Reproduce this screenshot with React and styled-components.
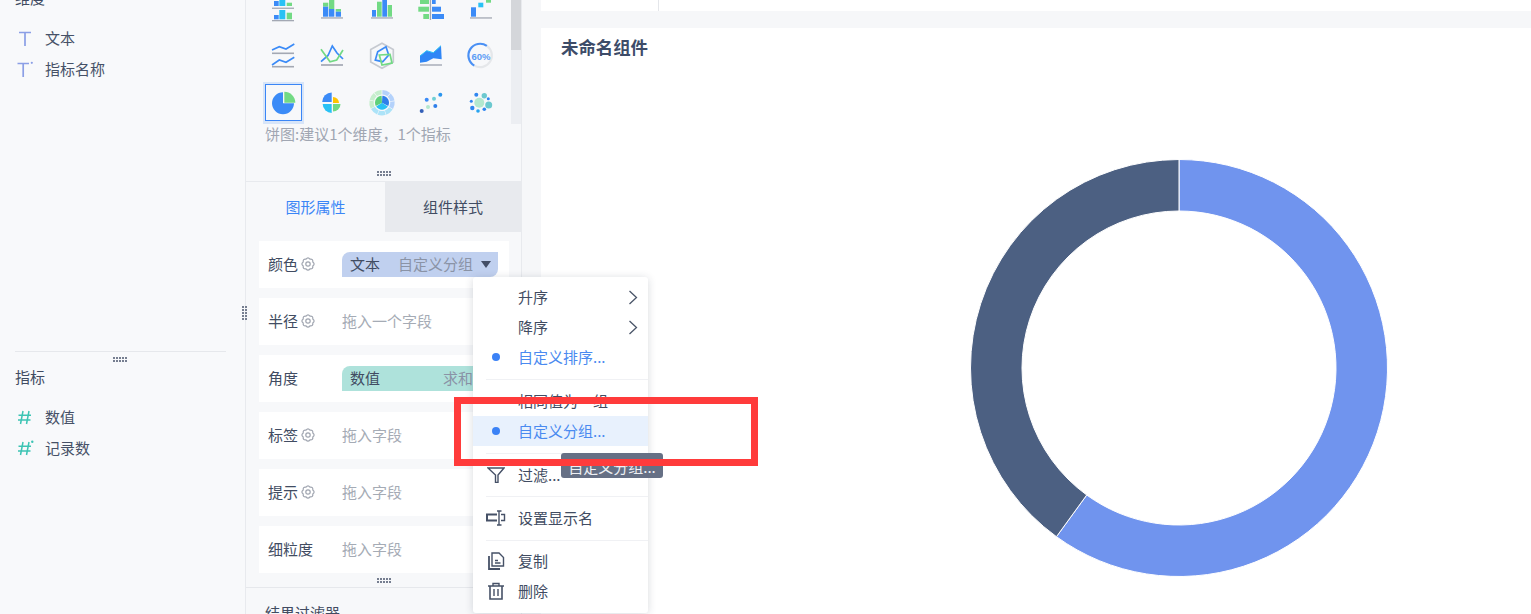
import React from 'react';
import styled, { createGlobalStyle } from 'styled-components';

const GlobalStyle = createGlobalStyle`
  html, body { margin: 0; padding: 0; height: 100%; overflow: hidden; background: #f6f7f9; }
  body { font-family: "Noto Sans CJK SC", "Liberation Sans", sans-serif; font-size: 15px; color: #414c62; }
  * { box-sizing: border-box; }
`;

const Page = styled.div`
  position: relative;
  display: flex;
  width: 1531px;
  height: 614px;
  overflow: hidden;
`;

/* ---------- field list ---------- */
const Sidebar = styled.aside`
  position: relative;
  flex: 0 0 246px;
  display: flex;
  flex-direction: column;
  background: #f8f9fb;
  border-right: 1px solid #e8eaee;
`;
const DimensionBlock = styled.section`
  flex: none;
  height: 352px;
  margin: 0 19px 0 15px;
  border-bottom: 1px solid #e6e8ec;
`;
const SectionTitle = styled.h3`
  margin: 0;
  font-size: 15px;
  font-weight: 400;
  line-height: 20px;
  color: #414c62;
`;
const DimensionTitle = styled(SectionTitle)`
  margin-top: -12px;
`;
const MeasureBlock = styled.section`
  margin: 0 19px 0 15px;
`;
const MeasureTitle = styled(SectionTitle)`
  margin-top: 1px;
`;
const FieldList = styled.ul`
  list-style: none;
  margin: ${p => p.$top}px 0 0;
  padding: 0;
`;
const FieldRow = styled.li`
  display: flex;
  align-items: center;
  height: 31px;
  padding-bottom: 1px;
  line-height: 30px;
  color: #465167;
`;
const FieldIcon = styled.span`
  display: flex;
  justify-content: flex-start;
  width: 30px;
  padding-left: 1px;
`;
const HandleRow = styled.div`
  flex: none;
  display: flex;
  justify-content: center;
  align-items: center;
  height: 14px;
  margin-left: ${p => p.$shift || 0}px;
`;
const SideGrip = styled.div`
  position: absolute;
  right: -3px;
  top: 305px;
  line-height: 0;
`;

/* ---------- chart picker + properties ---------- */
const Middle = styled.section`
  flex: 0 0 276px;
  display: flex;
  flex-direction: column;
  background: #f7f8fa;
  border-right: 1px solid #e8eaee;
  & > * { flex: none; }
`;
const Picker = styled.div`
  height: 182px;
  border-bottom: 1px solid #e8eaee;
`;
const PickerScroll = styled.div`
  display: flex;
  height: 124px;
  overflow: hidden;
`;
const ChartGrid = styled.div`
  display: grid;
  grid-template-columns: repeat(5, 49.5px);
  grid-auto-rows: 48px;
  width: 265px;
  height: 144px;
  margin-top: -17px;
  padding-left: 12px;
  flex: none;
`;
const ChartCell = styled.div`
  display: flex;
  align-items: center;
  justify-content: center;
`;
const SelectedFrame = styled.div`
  display: flex;
  align-items: center;
  justify-content: center;
  flex: none;
  width: 41px;
  height: 42px;
  margin-left: 2px;
  padding: 2px 2px 3px;
  background: #d7e5f9;
`;
const SelectedInner = styled.div`
  display: flex;
  align-items: center;
  justify-content: center;
  width: 100%;
  height: 100%;
  border: 1px solid #3b86f6;
  background: #f7f8fa;
`;
const ScrollTrack = styled.div`
  width: 10px;
  height: 124px;
  background: #eceef2;
`;
const ScrollThumb = styled.div`
  height: 50px;
  background: #d4d6da;
`;
const Caption = styled.p`
  margin: 0;
  padding-left: 19px;
  line-height: 20px;
  color: #a0a6b2;
`;
const PickerGrip = styled.div`
  display: flex;
  justify-content: center;
  margin-top: 26px;
  line-height: 0;
`;
const Tabs = styled.div`
  display: flex;
  height: 50px;
`;
const Tab = styled.div`
  display: flex;
  align-items: center;
  justify-content: center;
  width: ${p => p.$w}px;
  padding-bottom: 1px;
  color: ${p => (p.$active ? '#3b86f6' : '#414c62')};
  background: ${p => (p.$active ? '#f7f8fa' : '#e8eaee')};
`;
const ShelfList = styled.div`
  display: flex;
  flex-direction: column;
  gap: 10px;
  padding: 9px 12px 0 13px;
`;
const Shelf = styled.div`
  display: flex;
  align-items: center;
  height: 47px;
  padding-left: 9px;
  background: #fff;
`;
const ShelfLabel = styled.div`
  display: flex;
  align-items: center;
  gap: 3px;
  width: 74px;
  padding-bottom: 2px;
  color: #414c62;
`;
const Placeholder = styled.span`
  padding-bottom: 2px;
  color: #a5abb5;
`;
const Pill = styled.div`
  display: flex;
  align-items: center;
  width: 156px;
  height: 25px;
  padding: 0 ${p => p.$pr}px 2px 8px;
  border-radius: 8px 0 8px 0;
  background: ${p => p.$bg};
  color: #414c62;
`;
const PillName = styled.span`
  flex: 1;
`;
const PillHint = styled.span`
  color: #8a93a6;
`;
const Caret = styled.i`
  width: 0;
  height: 0;
  margin: 2px 0 0 8px;
  border-left: 5px solid transparent;
  border-right: 5px solid transparent;
  border-top: 7px solid #434e66;
`;
const ResultFilter = styled.div`
  border-top: 1px solid #e6e8ec;
  padding: 15px 0 0 19px;
  line-height: 20px;
  color: #414c62;
`;

/* ---------- canvas ---------- */
const Main = styled.main`
  flex: 1;
  display: flex;
  flex-direction: column;
  padding-left: 19px;
  background: #f6f7f9;
`;
const TopStrip = styled.div`
  flex: 0 0 11px;
  display: flex;
  background: #fff;
`;
const StripCell = styled.div`
  width: 118px;
  border-right: 1px solid #e4e6ea;
`;
const Card = styled.div`
  flex: 1;
  margin-top: 17px;
  background: #fff;
`;
const CardTitle = styled.h2`
  margin: 0;
  padding-left: 20px;
  font-size: 17.4px;
  font-weight: 700;
  line-height: 38px;
  color: #3d4c68;
`;
const ChartArea = styled.div`
  padding: 92px 0 0 428px;
  line-height: 0;
`;

/* ---------- context menu ---------- */
const Menu = styled.div`
  position: absolute;
  left: 473px;
  top: 277px;
  width: 175px;
  height: 336px;
  padding-top: 5px;
  background: #fff;
  border-radius: 3px;
  box-shadow: 0 1px 8px rgba(40, 50, 70, 0.18);
`;
const MenuItem = styled.div`
  display: flex;
  align-items: center;
  height: 30px;
  padding-right: 10px;
  color: ${p => (p.$active ? '#4a8af0' : '#414c62')};
  background: ${p => (p.$hover ? '#e8f1fd' : 'transparent')};
`;
const MenuIcon = styled.span`
  flex: 0 0 46px;
  display: flex;
  align-items: center;
  justify-content: center;
`;
const MenuLabel = styled.span`
  flex: 1;
  margin-left: -1px;
  padding-bottom: 2px;
`;
const Dot = styled.i`
  width: 8px;
  height: 8px;
  border-radius: 50%;
  background: #3b82f6;
`;
const MenuDivider = styled.div`
  height: 1px;
  margin: ${p => p.$top}px 0 ${p => p.$bottom}px 13px;
  background: #f0f1f4;
`;
const Tooltip = styled.div`
  position: absolute;
  left: 561px;
  top: 453px;
  width: 102px;
  height: 25px;
  border-radius: 3px;
  background: #667085;
  color: #eef0f4;
  line-height: 27px;
  text-align: center;
  white-space: nowrap;
`;
const Callout = styled.div`
  position: absolute;
  left: 454px;
  top: 397px;
  width: 304px;
  height: 69px;
  border: 7px solid #ff3b3b;
`;

/* ---------- drawings ---------- */
const BLUE = '#3b8bf7';
const CYAN = '#29c1f5';
const GREEN = '#72da84';
const AXIS = '#a3a8b3';

const polar = (cx, cy, r, deg) => {
  const a = ((deg - 90) * Math.PI) / 180;
  return [cx + r * Math.cos(a), cy + r * Math.sin(a)];
};
const ringPath = (cx, cy, r0, r1, from, to) => {
  const [ax, ay] = polar(cx, cy, r1, from);
  const [bx, by] = polar(cx, cy, r1, to);
  const [cx2, cy2] = polar(cx, cy, r0, to);
  const [dx, dy] = polar(cx, cy, r0, from);
  const large = to - from > 180 ? 1 : 0;
  return `M${ax} ${ay}A${r1} ${r1} 0 ${large} 1 ${bx} ${by}L${cx2} ${cy2}A${r0} ${r0} 0 ${large} 0 ${dx} ${dy}Z`;
};

/* eight rounded lobes around the gear's hub */
const gearPath = (() => {
  let d = '';
  for (let k = 0; k < 8; k++) {
    const [x0, y0] = polar(7, 7, 5.2, k * 45 - 22.5);
    const [qx, qy] = polar(7, 7, 7.4, k * 45);
    const [x1, y1] = polar(7, 7, 5.2, k * 45 + 22.5);
    d += `${k === 0 ? `M${x0} ${y0}` : ''}Q${qx} ${qy} ${x1} ${y1}`;
  }
  return `${d}Z`;
})();

const GearIcon = () => (
  <svg width="14" height="14" viewBox="0 0 14 14" fill="none" stroke="#a0a5b0" strokeWidth="1.2">
    <path d={gearPath} />
    <circle cx="7" cy="7" r="2.2" />
  </svg>
);

const Bars = ({ items }) =>
  items.map(([x, y, w, h, fill], i) => <rect key={i} x={x} y={y} width={w} height={h} fill={fill} />);

const Icon32 = ({ children }) => (
  <svg width="32" height="32" viewBox="0 0 32 32" overflow="visible" style={{ flex: 'none' }}>{children}</svg>
);

const chartIcons = [
  <Icon32>
    <Bars items={[[7, 10, 4.7, 5, BLUE], [12.3, 9, 6, 6, CYAN], [19.7, 11.7, 5.3, 3.3, GREEN], [7, 24, 4.7, 4.3, BLUE], [12.3, 19, 6, 9.3, CYAN], [19.7, 21.7, 5.3, 6.6, GREEN], [5, 16.6, 22, 1.3, AXIS], [5, 29, 22, 1.3, AXIS]]} />
  </Icon32>,
  <Icon32>
    <Bars items={[[7, 11.7, 5.3, 4, GREEN], [7, 15.7, 5.3, 10, BLUE], [13, 9, 5.3, 9, GREEN], [13, 18, 5.3, 7.7, BLUE], [19.7, 18, 5.3, 2.7, GREEN], [19.7, 20.7, 5.3, 5, BLUE], [5, 26.3, 22, 1.3, AXIS]]} />
  </Icon32>,
  <Icon32>
    <Bars items={[[6, 19, 4, 6.7, BLUE], [11, 10.7, 4.7, 15, GREEN], [16.3, 9, 4.7, 16.7, BLUE], [21.7, 14, 4.3, 11.7, GREEN], [5, 26.3, 22, 1.3, AXIS]]} />
  </Icon32>,
  <Icon32>
    <Bars items={[[5, 9, 9, 4, GREEN], [3.3, 15.7, 10.7, 5, GREEN], [8.3, 23, 5.7, 5, GREEN], [17, 9, 3.7, 4, BLUE], [17, 15.7, 9, 5, BLUE], [17, 23, 12, 5, BLUE], [14.8, 8, 1.3, 21, AXIS]]} />
  </Icon32>,
  <Icon32>
    <Bars items={[[6, 16.3, 5, 9.4, BLUE], [13.3, 11.7, 5, 4.6, CYAN], [21, 9, 5, 2.7, GREEN], [5, 26.3, 22, 1.3, AXIS]]} />
  </Icon32>,

  <Icon32>
    <g fill="none" strokeWidth="1.6">
      <polyline points="5,11 12.3,7.7 19,10 27.3,5" stroke={BLUE} />
      <polyline points="5,26 12.3,21 19,23.3 27.3,18.3" stroke={BLUE} />
      <line x1="5" y1="14.3" x2="27" y2="14.3" stroke={AXIS} />
      <line x1="5" y1="27.7" x2="27" y2="27.7" stroke={AXIS} />
    </g>
  </Icon32>,
  <Icon32>
    <g fill="none" strokeWidth="1.7">
      <polyline points="5,22.7 12,16.5 16.3,7 21,14 27,20" stroke={BLUE} />
      <polyline points="5,10.3 14,22.7 20.7,21 27,11" stroke={GREEN} />
      <line x1="5" y1="26" x2="27" y2="26" stroke={AXIS} />
    </g>
  </Icon32>,
  <Icon32>
    <g fill="none" strokeWidth="1.7">
      <polygon points="16,4.3 27.3,10.5 27.3,23 16,29.3 4.7,23 4.7,10.5" stroke="#c6cad1" />
      <polygon points="11.7,12.7 20,7.7 22.7,16 16.7,22.7 9.3,21" stroke={BLUE} />
      <polygon points="13.3,16 24,15.3 26,24 16,26" stroke={GREEN} />
    </g>
  </Icon32>,
  <Icon32>
    <polygon points="5,17 11.7,11.7 18.3,13.7 26,6.7 26.7,20.3 18.3,19.3 11.7,22.7 5,23.7" fill="#2f86f6" />
    <polyline points="5,17 11.7,11.7 18.3,13.7 26,6.7" fill="none" stroke={CYAN} strokeWidth="1" />
    <line x1="5" y1="26" x2="27" y2="26" stroke={AXIS} strokeWidth="1.4" />
  </Icon32>,
  <Icon32>
    <g fill="none" strokeWidth="2.2">
      <path d={`M${polar(16, 17, 11.7, 30).join(' ')}A11.7 11.7 0 0 1 ${polar(16, 17, 11.7, 215).join(' ')}`} stroke="#e5e7ea" />
      <path d={`M${polar(16, 17, 11.7, 215).join(' ')}A11.7 11.7 0 1 1 ${polar(16, 17, 11.7, 30).join(' ')}`} stroke="#4a90f4" />
    </g>
    <text x="16" y="20.5" textAnchor="middle" fontSize="9.5" fontWeight="700" fill="#5b9cf5" fontFamily="Liberation Sans, sans-serif">60%</text>
  </Icon32>,

  <Icon32>
    <path d="M15 5.3A11 11 0 1 0 26 16.3H15Z" fill={BLUE} />
    <path d="M16.3 4.7A11 11 0 0 1 27.3 15.7H16.3Z" fill={GREEN} />
  </Icon32>,
  <Icon32>
    <path d={ringPath(15.7, 15, 0, 9.5, 270, 360)} fill={BLUE} />
    <path d={ringPath(17, 16, 0, 6, 0, 90)} fill="#ffc400" />
    <path d={ringPath(17, 17, 0, 7.5, 90, 180)} fill={GREEN} />
    <path d={ringPath(15.7, 17, 0, 9, 180, 270)} fill={CYAN} />
  </Icon32>,
  <Icon32>
    <path d={ringPath(16, 15.7, 8.3, 12.7, 2, 40)} fill="#b4d2fb" />
    <path d={ringPath(16, 15.7, 8.3, 12.7, 43, 80)} fill="#b4d2fb" />
    <path d={ringPath(16, 15.7, 8.3, 12.7, 83, 120)} fill="#b4d2fb" />
    <path d={ringPath(16, 15.7, 8.3, 12.7, 123, 160)} fill="#ace3f8" />
    <path d={ringPath(16, 15.7, 8.3, 12.7, 163, 200)} fill="#ace3f8" />
    <path d={ringPath(16, 15.7, 8.3, 12.7, 203, 240)} fill="#ace3f8" />
    <path d={ringPath(16, 15.7, 8.3, 12.7, 243, 280)} fill="#c6eecd" />
    <path d={ringPath(16, 15.7, 8.3, 12.7, 283, 320)} fill="#c6eecd" />
    <path d={ringPath(16, 15.7, 8.3, 12.7, 323, 358)} fill="#c6eecd" />
    <path d={ringPath(16, 15.7, 0, 7, 3, 117)} fill="#2f7fea" />
    <path d={ringPath(16, 15.7, 0, 7, 123, 237)} fill={CYAN} />
    <path d={ringPath(16, 15.7, 0, 7, 243, 357)} fill="#5fd07a" />
  </Icon32>,
  <Icon32>
    <circle cx="6.7" cy="24" r="2" fill="#3460b8" />
    <circle cx="11.7" cy="12.7" r="2" fill={BLUE} />
    <circle cx="13" cy="20" r="2" fill="#b3e8cf" />
    <circle cx="19" cy="11.7" r="2" fill="#6fcfd6" />
    <circle cx="20.3" cy="19" r="2" fill="#2f7fea" />
    <circle cx="25.3" cy="7.7" r="2" fill="#2a95ee" />
  </Icon32>,
  <Icon32>
    <circle cx="14.3" cy="15.7" r="5" fill="#b3e8cf" />
    <circle cx="23.7" cy="18" r="3.5" fill="#6cc9cf" />
    <circle cx="19.3" cy="8.7" r="2.7" fill="#6cc9cf" />
    <circle cx="11.3" cy="7.7" r="2" fill="#2f86f0" />
    <circle cx="23.3" cy="11.7" r="1.5" fill="#2f86f0" />
    <circle cx="6.3" cy="14.3" r="1.5" fill="#2f86f0" />
    <circle cx="7.3" cy="21" r="2.2" fill="#2f86f0" />
    <circle cx="13" cy="24" r="1.8" fill="#29a4f0" />
    <circle cx="19.3" cy="22.3" r="1.8" fill="#2f86f0" />
  </Icon32>,
];

const Grip = ({ vertical }) => {
  const dots = [];
  for (let i = 0; i < 5; i++) {
    for (let j = 0; j < 2; j++) {
      const a = i * 3 + 1;
      const b = j * 3 + 1;
      dots.push(<rect key={`${i}-${j}`} x={vertical ? b : a} y={vertical ? a : b} width="2" height="2" />);
    }
  }
  return (
    <svg width={vertical ? 7 : 16} height={vertical ? 16 : 7} fill="#767e90">{dots}</svg>
  );
};

const TextTypeIcon = ({ star }) => (
  <svg width="18" height="18" viewBox="0 0 18 18" fill="none" stroke="#8b9fe6" strokeWidth="1.7">
    <path d={star ? 'M1.5 3.5H13M7.2 3.5V17' : 'M3 3.5H15M9 3.5V17'} />
    {star && <circle cx="15.8" cy="2.8" r="1.1" fill="#8b9fe6" stroke="none" />}
  </svg>
);

const NumberTypeIcon = ({ star }) => (
  <svg width="18" height="18" viewBox="0 0 18 18" fill="none" stroke="#3cc4b4" strokeWidth="1.5">
    <path d="M7 3L4.5 16M13 3L10.5 16M2.5 7.2H15M2 12H14.5" />
    {star && <circle cx="16.3" cy="2.8" r="1.2" fill="#3cc4b4" stroke="none" />}
  </svg>
);

const Chevron = () => (
  <svg width="10" height="15" viewBox="0 0 10 15" fill="none" stroke="#4a5568" strokeWidth="1.3">
    <polyline points="1.5,1 8.5,7.5 1.5,14" />
  </svg>
);

const menuStroke = { fill: 'none', stroke: '#465167', strokeWidth: 1.4 };

const FilterIcon = () => (
  <svg width="18" height="16" viewBox="0 0 18 16" {...menuStroke}>
    <path d="M1 1H17L11 8V15.5H8.5V8Z" />
  </svg>
);
const RenameIcon = () => (
  <svg width="20" height="16" viewBox="0 0 20 16" {...menuStroke}>
    <path d="M11 4.5H1V10.5H11" strokeWidth="2" />
    <path d="M15 4.5H18.5V10.5H15" />
    <path d="M11 1H15.5M13 1V15M11 15H15.5" />
  </svg>
);
const CopyIcon = () => (
  <svg width="18" height="18" viewBox="0 0 18 18" {...menuStroke}>
    <path d="M5 1H12L16.5 5.5V14H5Z" />
    <path d="M2 4V17H13" strokeWidth="1.8" />
    <path d="M8 8.5H11M8 11H13.5" />
  </svg>
);
const TrashIcon = () => (
  <svg width="18" height="18" viewBox="0 0 18 18" {...menuStroke}>
    <path d="M1 4H17M6 4V1.5H12V4" />
    <path d="M3 4V17H15V4" strokeWidth="1.6" />
    <path d="M7 7V14M11 7V14" />
  </svg>
);

const Donut = () => (
  <svg width="420" height="420" viewBox="0 0 420 420">
    <path d={ringPath(210, 210, 157, 208.5, 0, 216)} fill="#7094ee" stroke="#fff" strokeWidth="1" />
    <path d={ringPath(210, 210, 157, 208.5, 216, 360)} fill="#4c6082" stroke="#fff" strokeWidth="1" />
  </svg>
);

const shelves = [
  { label: '半径', gear: true, hint: '拖入一个字段' },
  { label: '角度', pill: { name: '数值', hint: '求和', bg: '#aee2db' } },
  { label: '标签', gear: true, hint: '拖入字段' },
  { label: '提示', gear: true, hint: '拖入字段' },
  { label: '细粒度', hint: '拖入字段' },
];

export default function App() {
  return (
    <Page>
      <GlobalStyle />

      <Sidebar>
        <DimensionBlock>
          <DimensionTitle>维度</DimensionTitle>
          <FieldList $top={15}>
            <FieldRow><FieldIcon><TextTypeIcon /></FieldIcon>文本</FieldRow>
            <FieldRow><FieldIcon><TextTypeIcon star /></FieldIcon>指标名称</FieldRow>
          </FieldList>
        </DimensionBlock>
        <HandleRow $shift={-5}><Grip /></HandleRow>
        <MeasureBlock>
          <MeasureTitle>指标</MeasureTitle>
          <FieldList $top={15}>
            <FieldRow><FieldIcon><NumberTypeIcon /></FieldIcon>数值</FieldRow>
            <FieldRow><FieldIcon><NumberTypeIcon star /></FieldIcon>记录数</FieldRow>
          </FieldList>
        </MeasureBlock>
        <SideGrip><Grip vertical /></SideGrip>
      </Sidebar>

      <Middle>
        <Picker>
          <PickerScroll>
            <ChartGrid>
              {chartIcons.map((icon, i) => (
                <ChartCell key={i}>
                  {i === 10 ? <SelectedFrame><SelectedInner>{icon}</SelectedInner></SelectedFrame> : icon}
                </ChartCell>
              ))}
            </ChartGrid>
            <ScrollTrack><ScrollThumb /></ScrollTrack>
          </PickerScroll>
          <Caption>饼图:建议1个维度，1个指标</Caption>
          <PickerGrip><Grip /></PickerGrip>
        </Picker>
        <Tabs>
          <Tab $w={139} $active>图形属性</Tab>
          <Tab $w={136}>组件样式</Tab>
        </Tabs>
        <ShelfList>
          <Shelf>
            <ShelfLabel>颜色<GearIcon /></ShelfLabel>
            <Pill $bg="#c0d0ef" $pr={7}>
              <PillName>文本</PillName>
              <PillHint>自定义分组</PillHint>
              <Caret />
            </Pill>
          </Shelf>
          {shelves.map(s => (
            <Shelf key={s.label}>
              <ShelfLabel>{s.label}{s.gear && <GearIcon />}</ShelfLabel>
              {s.pill ? (
                <Pill $bg={s.pill.bg} $pr={25}>
                  <PillName>{s.pill.name}</PillName>
                  <PillHint>{s.pill.hint}</PillHint>
                </Pill>
              ) : (
                <Placeholder>{s.hint}</Placeholder>
              )}
            </Shelf>
          ))}
        </ShelfList>
        <HandleRow><Grip /></HandleRow>
        <ResultFilter>结果过滤器</ResultFilter>
      </Middle>

      <Main>
        <TopStrip><StripCell /></TopStrip>
        <Card>
          <CardTitle>未命名组件</CardTitle>
          <ChartArea><Donut /></ChartArea>
        </Card>
      </Main>

      <Menu>
        <MenuItem><MenuIcon /><MenuLabel>升序</MenuLabel><Chevron /></MenuItem>
        <MenuItem><MenuIcon /><MenuLabel>降序</MenuLabel><Chevron /></MenuItem>
        <MenuItem $active><MenuIcon><Dot /></MenuIcon><MenuLabel>自定义排序...</MenuLabel></MenuItem>
        <MenuDivider $top={7} $bottom={6} />
        <MenuItem><MenuIcon /><MenuLabel>相同值为一组</MenuLabel></MenuItem>
        <MenuItem $active $hover><MenuIcon><Dot /></MenuIcon><MenuLabel>自定义分组...</MenuLabel></MenuItem>
        <MenuDivider $top={7} $bottom={6} />
        <MenuItem><MenuIcon><FilterIcon /></MenuIcon><MenuLabel>过滤...</MenuLabel></MenuItem>
        <MenuDivider $top={6} $bottom={6} />
        <MenuItem><MenuIcon><RenameIcon /></MenuIcon><MenuLabel>设置显示名</MenuLabel></MenuItem>
        <MenuDivider $top={7} $bottom={5} />
        <MenuItem><MenuIcon><CopyIcon /></MenuIcon><MenuLabel>复制</MenuLabel></MenuItem>
        <MenuItem><MenuIcon><TrashIcon /></MenuIcon><MenuLabel>删除</MenuLabel></MenuItem>
      </Menu>
      <Tooltip>自定义分组...</Tooltip>
      <Callout />
    </Page>
  );
}
